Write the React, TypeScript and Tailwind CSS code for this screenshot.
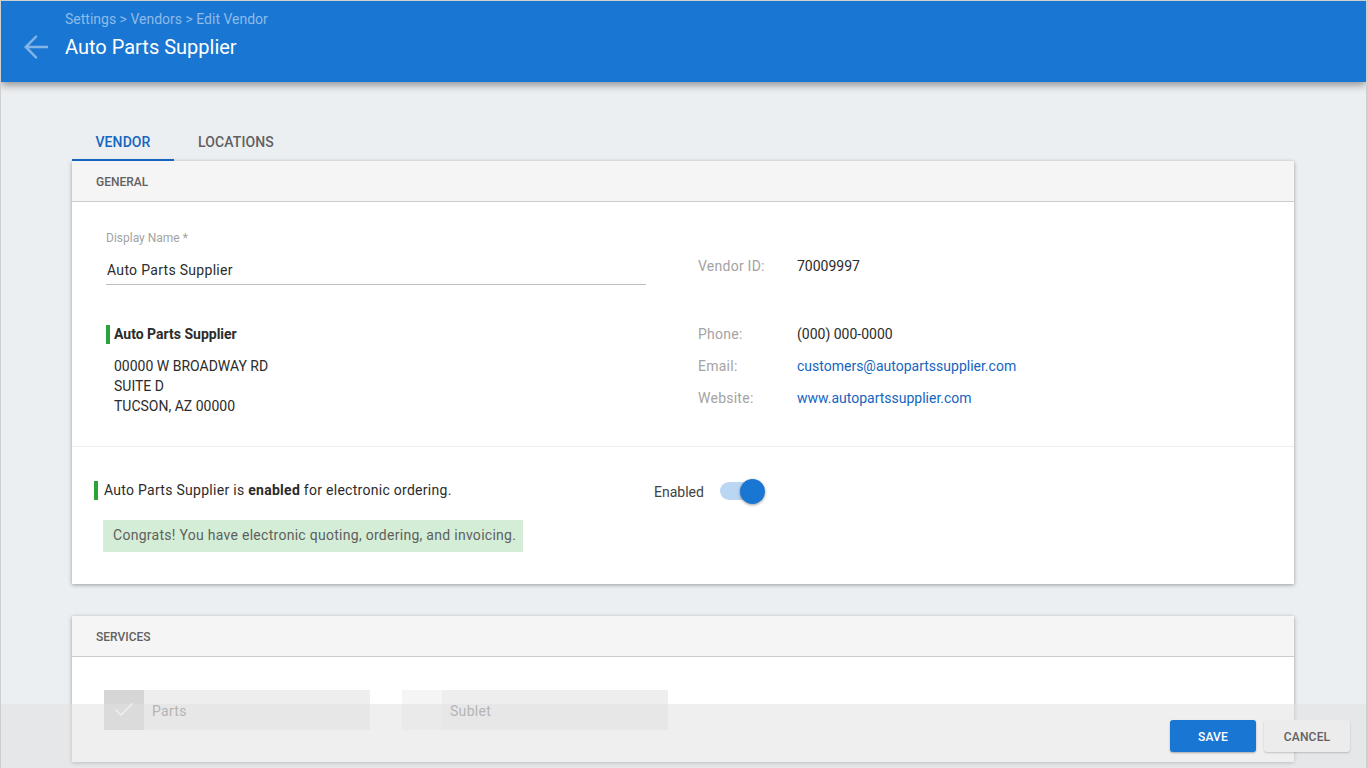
import { Check } from 'lucide-react';

function InfoRow({ label, value, link, className = '' }: { label: string; value: string; link?: boolean; className?: string }) {
  return (
    <div className={`flex text-[14px] leading-[20px] ${className}`}>
      <span className="w-[99px] tracking-[0.25px] text-[#a3a3a3]">{label}</span>
      <span className={link ? 'text-[#1565c0]' : 'text-[#2b2b2b]'}>{value}</span>
    </div>
  );
}

function ServiceTile({ label, checked }: { label: string; checked?: boolean }) {
  return (
    <div className="flex h-[40px] w-[266px] items-center bg-[#eeeeee]">
      <div className={`flex h-[40px] w-[40px] items-center justify-center ${checked ? 'bg-[#d6d6d6]' : 'bg-[#f5f5f5]'}`}>
        {checked && <Check size={24} strokeWidth={1.5} className="text-white" />}
      </div>
      <span className="ml-[8px] pt-[2px] text-[14px] tracking-[0.3px] text-[#888888]">{label}</span>
    </div>
  );
}

export default function App() {
  return (
    <div className="relative h-[768px] w-[1368px] overflow-hidden border-t border-r-2 border-l border-[#cfcfcf] bg-[#eceff1] font-['Roboto',sans-serif]">
      {/* Header */}
      <header className="flex h-[81px] items-start bg-[#1976d2] shadow-[0_3px_8px_rgba(0,0,0,0.4)]">
        <svg viewBox="0 0 24 24" className="mt-[28px] ml-[17px] h-[36px] w-[36px] fill-[#83b5e8]">
          <path d="M20 11.1H7.2l5.8-5.9L12 4l-8 8 8 8 1-1.2-5.8-5.9H20z" />
        </svg>
        <div className="ml-[11px] pt-[10px]">
          <div className="text-[14px] leading-[16px] text-[#8dbbea]">Settings &gt; Vendors &gt; Edit Vendor</div>
          <div className="mt-[7px] text-[20px] leading-[26px] text-white">Auto Parts Supplier</div>
        </div>
      </header>

      <main className="ml-[71px] w-[1222px] pt-[40px]">
        {/* Tabs */}
        <div className="flex h-[39px] text-[14px] font-medium tracking-[0.1px]">
          <div className="flex w-[102px] items-center justify-center border-b-2 border-[#1565c0] pt-[3px] text-[#1565c0]">VENDOR</div>
          <div className="flex w-[124px] items-center justify-center pt-[2px] text-[#616161]">LOCATIONS</div>
        </div>

        {/* General card */}
        <section className="h-[423px] bg-white shadow-[0_1px_4px_rgba(0,0,0,0.35)]">
          <div className="flex h-[41px] items-center border-b border-[#cccccc] bg-[#f5f5f5] pt-[1px] pl-[24px] text-[12px] font-medium text-[#616161]">GENERAL</div>
          <div className="flex h-[245px] border-b border-[#eeeeee] pt-[29px] pl-[34px]">
            <div className="w-[540px]">
              <div className="text-[12px] leading-[14px] text-[#a3a3a3]">Display Name *</div>
              <div className="mt-[13px] h-[27px] border-b border-[#bdbdbd] pl-px text-[14px] leading-[24px] tracking-[0.3px] text-[#2b2b2b]">Auto Parts Supplier</div>
              <div className="mt-[40px] border-l-[4px] border-[#2aa339] pl-[4px] text-[14px] leading-[19px] font-bold text-[#2b2b2b]">Auto Parts Supplier</div>
              <div className="mt-[12px] pl-[8px] text-[14px] leading-[20px] text-[#2b2b2b]">
                <div>00000 W BROADWAY RD</div>
                <div>SUITE D</div>
                <div>TUCSON, AZ 00000</div>
              </div>
            </div>
            <div className="ml-[52px] pt-[25px]">
              <InfoRow label="Vendor ID:" value="70009997" />
              <InfoRow label="Phone:" value="(000) 000-0000" className="mt-[48px]" />
              <InfoRow label="Email:" value="customers@autopartssupplier.com" link className="mt-[12px]" />
              <InfoRow label="Website:" value="www.autopartssupplier.com" link className="mt-[12px]" />
            </div>
          </div>
          <div className="flex pt-[34px] pl-[22px]">
            <div className="w-[560px]">
              <div className="border-l-[4px] border-[#2aa339] pl-[6px] text-[14px] leading-[19px] tracking-[0.28px] text-[#2b2b2b]">
                Auto Parts Supplier is <b>enabled</b> for electronic ordering.
              </div>
              <div className="mt-[20px] ml-[9px] flex h-[32px] w-[420px] items-center bg-[#d4edd6] pb-[2px] pl-[10px] text-[14px] tracking-[0.28px] text-[#5f5f5f]">
                Congrats! You have electronic quoting, ordering, and invoicing.
              </div>
            </div>
            <div className="-mt-[2px] flex h-[24px] items-center">
              <span className="pt-[2px] text-[14px] text-[#424242]">Enabled</span>
              <div className="relative ml-[16px] h-[18px] w-[38px] rounded-full bg-[#bad6f2]">
                <div className="absolute top-[-3px] right-[-7px] h-[25px] w-[25px] rounded-full bg-[#1976d2] shadow-[0_1px_3px_rgba(0,0,0,0.4)]" />
              </div>
            </div>
          </div>
        </section>

        {/* Services card */}
        <section className="mt-[32px] h-[146px] bg-white shadow-[0_1px_4px_rgba(0,0,0,0.35)]">
          <div className="flex h-[41px] items-center border-b border-[#cccccc] bg-[#f5f5f5] pt-[1px] pl-[24px] text-[12px] font-medium text-[#616161]">SERVICES</div>
          <div className="flex gap-[32px] pt-[33px] pl-[32px]">
            <ServiceTile label="Parts" checked />
            <ServiceTile label="Sublet" />
          </div>
        </section>
      </main>

      {/* Action bar sits over the page */}
      <div className="absolute right-0 bottom-0 left-0 flex h-[64px] justify-end gap-[8px] bg-[rgba(224,224,224,0.5)] pt-[16px] pr-[16px]">
        <button className="h-[32px] w-[86px] rounded-[3px] bg-[#1976d2] pt-[1px] text-[12px] font-medium tracking-[0.2px] text-white shadow-[0_1px_2px_rgba(0,0,0,0.3)]">SAVE</button>
        <button className="h-[32px] w-[86px] rounded-[3px] bg-[#ececec] pt-[2px] text-[12px] font-medium tracking-[0.2px] text-[#616161] shadow-[0_1px_2px_rgba(0,0,0,0.2)]">CANCEL</button>
      </div>
    </div>
  );
}
